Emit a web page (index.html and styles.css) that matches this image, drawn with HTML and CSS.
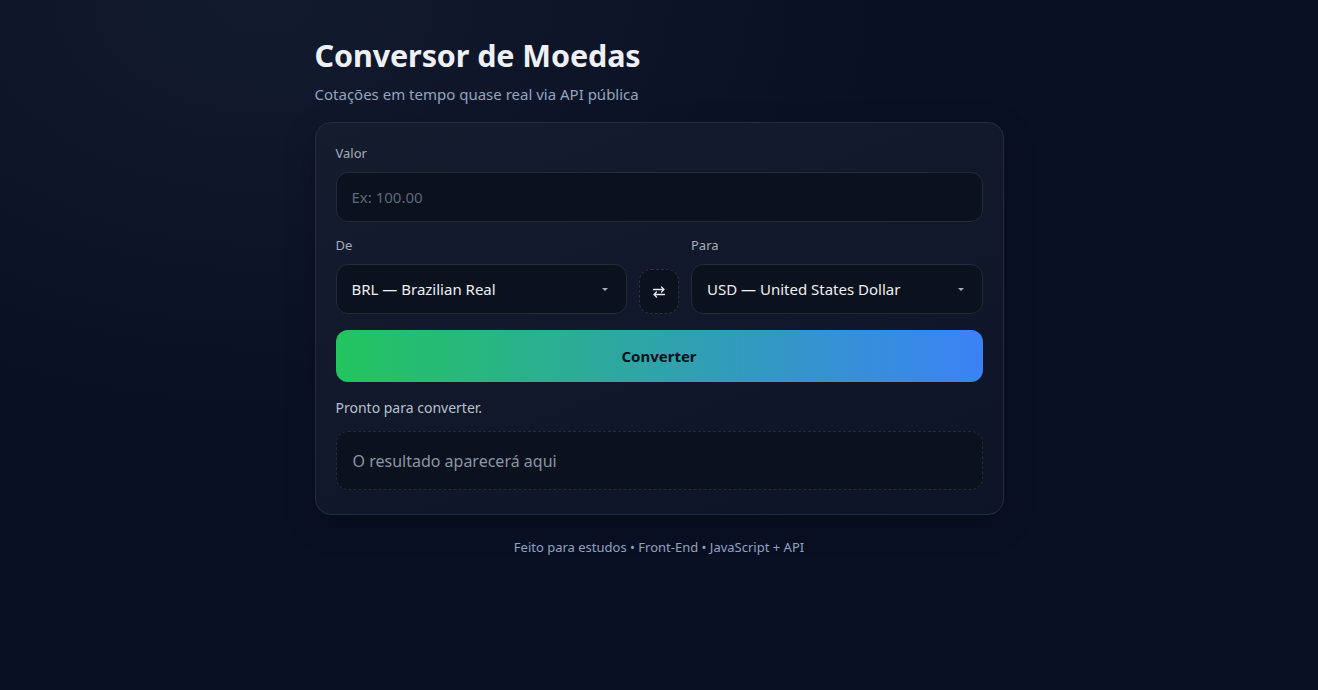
FILE: index.html
```html
<!DOCTYPE html>
<html lang="pt-BR">
<head>
<meta charset="utf-8">
<title>Conversor de Moedas</title>
<link rel="stylesheet" href="styles.css">
</head>
<body>
<main class="wrap">
  <header class="head">
    <h1 class="title">Conversor de Moedas</h1>
    <p class="subtitle">Cotações em tempo quase real via API pública</p>
  </header>
  <section class="card">
    <label class="label" for="valor">Valor</label>
    <input class="field" id="valor" type="text" placeholder="Ex: 100.00">
    <div class="row">
      <div class="col">
        <label class="label">De</label>
        <div class="select-wrap">
          <div class="field select">BRL — Brazilian Real</div>
        </div>
      </div>
      <button class="swap" type="button" aria-label="Inverter">
        <svg width="14" height="14" viewBox="0 0 14 14" fill="none" stroke="#e5e7eb" stroke-width="1.3" stroke-linecap="round" stroke-linejoin="round">
          <path d="M1.5 4.5h10.5M9.5 2l2.5 2.5L9.5 7"/>
          <path d="M12.5 9.5H2M4.5 7L2 9.5 4.5 12"/>
        </svg>
      </button>
      <div class="col">
        <label class="label">Para</label>
        <div class="select-wrap">
          <div class="field select">USD — United States Dollar</div>
        </div>
      </div>
    </div>
    <button class="convert" type="button">Converter</button>
    <p class="status">Pronto para converter.</p>
    <div class="result">O resultado aparecerá aqui</div>
  </section>
  <footer class="foot">Feito para estudos • Front-End • JavaScript + API</footer>
</main>
</body>
</html>
```
FILE: styles.css
```css
* { box-sizing: border-box; }
html, body { height: 100%; }
body {
  margin: 0;
  font-family: "Noto Sans", "Open Sans", sans-serif;
  color: #e5e7eb;
  background:
    radial-gradient(900px 600px at 20% 0%, #121a2e 0%, rgba(18,26,46,0) 70%),
    #0a1024;
}
.wrap {
  width: 689px;
  margin: 0 auto;
  padding-top: 35px;
}
.head { margin-bottom: 17px; }
.title {
  margin: 0;
  font-size: 30.5px;
  line-height: 40px;
  font-weight: 700;
  color: #eef0f4;
  letter-spacing: -0.1px;
}
.subtitle {
  margin: 8px 0 0;
  font-size: 15px;
  line-height: 22px;
  color: #93a4bd;
}
.card {
  border: 1px solid #242d40;
  border-radius: 16px;
  background: linear-gradient(160deg, #151c2e 0%, #0e1427 100%);
  padding: 20px 20px 24px;
  box-shadow: 0 10px 30px rgba(0,0,0,0.25);
}
.label {
  display: block;
  font-size: 13px;
  line-height: 18px;
  color: #a3adbd;
  margin: 1px 0 10px;
}
.field {
  display: block;
  width: 100%;
  height: 50px;
  border: 1px solid #222b3b;
  border-radius: 12px;
  background: #0b111d;
  color: #e5e7eb;
  font-family: inherit;
  font-size: 15px;
  padding: 0 15px;
  outline: none;
}
.field::placeholder { color: #5f6878; }
.row {
  display: grid;
  grid-template-columns: 1fr 40px 1fr;
  gap: 12px;
  align-items: end;
  margin-top: 13px;
}
.select-wrap { position: relative; }
.select {
  display: flex;
  align-items: center;
  color: #eef0f4;
}
.select-wrap::after {
  content: "";
  position: absolute;
  right: 19px;
  top: 24px;
  border-left: 3px solid transparent;
  border-right: 3px solid transparent;
  border-top: 3px solid #a3adbd;
}
.swap {
  width: 40px;
  height: 45px;
  border: 1px dashed #2a3344;
  border-radius: 12px;
  background: #0b111d;
  display: flex;
  align-items: center;
  justify-content: center;
  padding: 0;
  cursor: pointer;
}
.convert {
  display: block;
  width: 100%;
  height: 52px;
  margin-top: 16px;
  border: 0;
  border-radius: 12px;
  background: linear-gradient(90deg, #22c55e 0%, #3b82f6 100%);
  color: #07111d;
  font-family: inherit;
  font-size: 15px;
  font-weight: 700;
  cursor: pointer;
}
.status {
  margin: 16px 0 0;
  font-size: 14px;
  line-height: 20px;
  color: #b8c0cc;
}
.result {
  margin-top: 13px;
  height: 59px;
  border: 1px dashed #232c3c;
  border-radius: 12px;
  background: #0b111d;
  display: flex;
  align-items: center;
  padding: 0 16px;
  font-size: 16px;
  color: #8b95a5;
}
.foot {
  margin-top: 24px;
  text-align: center;
  font-size: 13px;
  line-height: 16px;
  color: #8ea3c0;
}
```
